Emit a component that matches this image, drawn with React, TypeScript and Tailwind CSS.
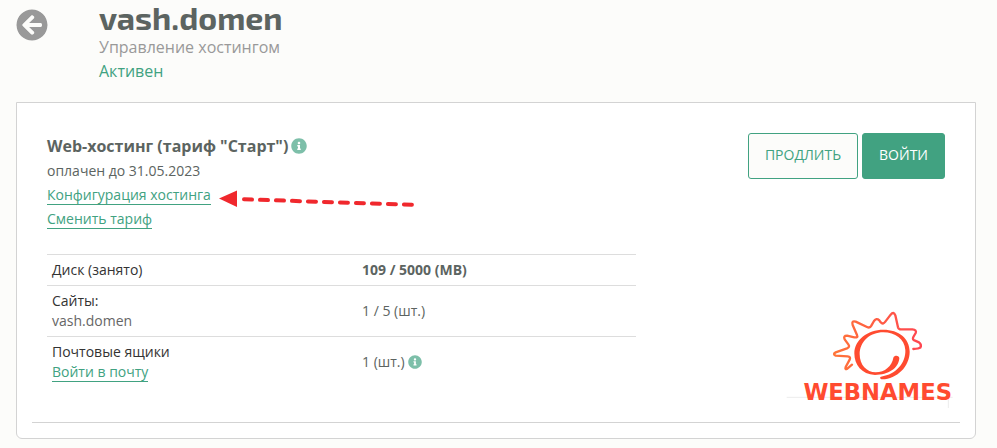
import React from 'react';
import { FaArrowCircleLeft, FaInfoCircle } from 'react-icons/fa';

interface TextLinkProps {
  href: string;
  children: React.ReactNode;
}

const TextLink: React.FC<TextLinkProps> = ({ href, children }) => {
  return (
    <a href={href} className="border-b border-[#41a281] text-[#41a281] hover:border-transparent">
      {children}
    </a>
  );
};

const PageHeader: React.FC = () => {
  return (
    <header className="flex items-start">
      <button type="button" aria-label="Назад" className="mt-[9px] mr-[51px] text-[#999999]">
        <FaArrowCircleLeft className="h-8 w-8 rounded-full" />
      </button>
      <div>
        <h1 className="font-['Exo_2','Open_Sans',sans-serif] text-[32px] leading-[35px] font-bold text-[#5c6461]">
          vash.domen
        </h1>
        <p className="text-base text-[#999999]">Управление хостингом</p>
        <p className="text-base text-[#41a281]">Активен</p>
      </div>
    </header>
  );
};

const PointerArrow: React.FC = () => {
  return (
    <svg
      className="pointer-events-none absolute top-0 left-full ml-[7px] h-6 w-[200px]"
      viewBox="0 0 200 24"
      aria-hidden="true"
    >
      <path d="M1 15.5 L19 7.5 V24 Z" fill="#f0282d" />
      <path
        d="M26 16.3 L194 21.8"
        stroke="#f0282d"
        strokeWidth="4"
        strokeLinecap="round"
        strokeDasharray="8 8"
      />
    </svg>
  );
};

const Logo: React.FC = () => {
  return (
    <svg className="h-[100px] w-[168px] shrink-0" viewBox="0 0 504 300" role="img" aria-label="Webnames">
      <defs>
        <linearGradient id="rays" x1="0" y1="0" x2="1" y2="0">
          <stop offset="0" stopColor="#ff7438" />
          <stop offset="1" stopColor="#ff4650" />
        </linearGradient>
      </defs>
      <path d="M2 262 H500 M487 262 V294" stroke="#ececec" strokeWidth="3" fill="none" />
      <g transform="translate(117 -15)">
        <path
          d="M81 179 L67 191 Q59 195 62 186 L74 164 Q78 155 68 154 L32 152 Q22 147 32 142 L66 130 Q76 126 70 118 L59 103 Q54 92 66 92 L88 97 Q100 99 96 90 L83 60 Q79 46 92 50 L126 66 Q135 70 139 62 L147 48 Q154 38 163 46 L167 52 Q174 60 181 50 L197 29 Q206 18 211 31 L219 67 Q221 73 228 73 L262 73 Q276 74 272 84 L265 96 Q261 104 270 107 L282 112 Q291 119 286 128 Q282 131 265 132"
          fill="none"
          stroke="url(#rays)"
          strokeWidth="7"
          strokeLinejoin="round"
          strokeLinecap="round"
        />
        <path
          d="M168 215 C215 208 243 172 241 135 C239 102 210 82 175 82 C135 82 104 110 104 148 C104 180 125 202 152 202 C180 202 201 182 205 158 C208 150 223 150 223 160 C221 190 190 210 150 210 C110 208 88 180 88 145 C88 105 128 74 175 74 C222 74 254 100 254 140 C254 185 215 222 172 223 C164 222 164 216 168 215 Z"
          fill="#ff4b30"
        />
      </g>
      <text
        x="275"
        y="270"
        textAnchor="middle"
        className="font-['DejaVu_Sans',sans-serif] text-[68px] font-bold"
        fill="#ff4b30"
      >
        WEBNAMES
      </text>
    </svg>
  );
};

const UsageTable: React.FC = () => {
  return (
    <table className="w-full max-w-[589px] table-fixed text-left leading-5">
      <tbody>
        <tr className="border-t border-[#dddddd]">
          <th scope="row" className="w-[310px] p-[5px] font-normal text-[#333333]">
            Диск (занято)
          </th>
          <td className="p-[5px] font-bold">109 / 5000 (MB)</td>
        </tr>
        <tr className="border-t border-[#dddddd]">
          <th scope="row" className="p-[5px] font-normal text-[#333333]">
            Сайты:
            <div className="text-[#666666]">vash.domen</div>
          </th>
          <td className="p-[5px]">1 / 5 (шт.)</td>
        </tr>
        <tr className="border-t border-[#dddddd]">
          <th scope="row" className="p-[5px] font-normal text-[#333333]">
            Почтовые ящики
            <div>
              <TextLink href="#mail">Войти в почту</TextLink>
            </div>
          </th>
          <td className="p-[5px]">
            <span className="flex items-center gap-[3px]">
              1 (шт.) <FaInfoCircle className="h-[14px] w-[14px] text-[#7dbfa9]" />
            </span>
          </td>
        </tr>
      </tbody>
    </table>
  );
};

export default function App() {
  return (
    <div className="min-h-screen bg-[#fcfcfa] pr-[21px] pb-2 pl-4 font-['Open_Sans','Noto_Sans',sans-serif] text-sm text-[#5c6461]">
      <PageHeader />
      <main className="mt-[19px] rounded-b-md border border-[#d3d3d3] bg-white px-[15px] pt-[30px] pb-[15px]">
        <div className="flex items-start justify-between px-[15px]">
          <div className="leading-6">
            <h2 className="flex items-center gap-[3px] py-px text-base font-bold">
              Web-хостинг (тариф "Старт")
              <FaInfoCircle className="h-4 w-4 text-[#7dbfa9]" />
            </h2>
            <p>оплачен до 31.05.2023</p>
            <p className="relative w-fit">
              <TextLink href="#config">Конфигурация хостинга</TextLink>
              <PointerArrow />
            </p>
            <p>
              <TextLink href="#tariff">Сменить тариф</TextLink>
            </p>
          </div>
          <div className="flex gap-1">
            <button
              type="button"
              className="rounded-[3px] border border-[#41a281] bg-[#fcfcfa] px-4 pt-[11px] pb-[13px] text-[#41a281]"
            >
              ПРОДЛИТЬ
            </button>
            <button
              type="button"
              className="rounded-[3px] border border-[#41a281] bg-[#41a281] px-4 pt-[11px] pb-[13px] text-white"
            >
              ВОЙТИ
            </button>
          </div>
        </div>
        <div className="mt-[23px] flex items-start justify-between pr-[6px] pl-[15px]">
          <UsageTable />
          <div className="pt-14">
            <Logo />
          </div>
        </div>
        <hr className="mt-3 border-[#d3d3d3]" />
      </main>
    </div>
  );
}
